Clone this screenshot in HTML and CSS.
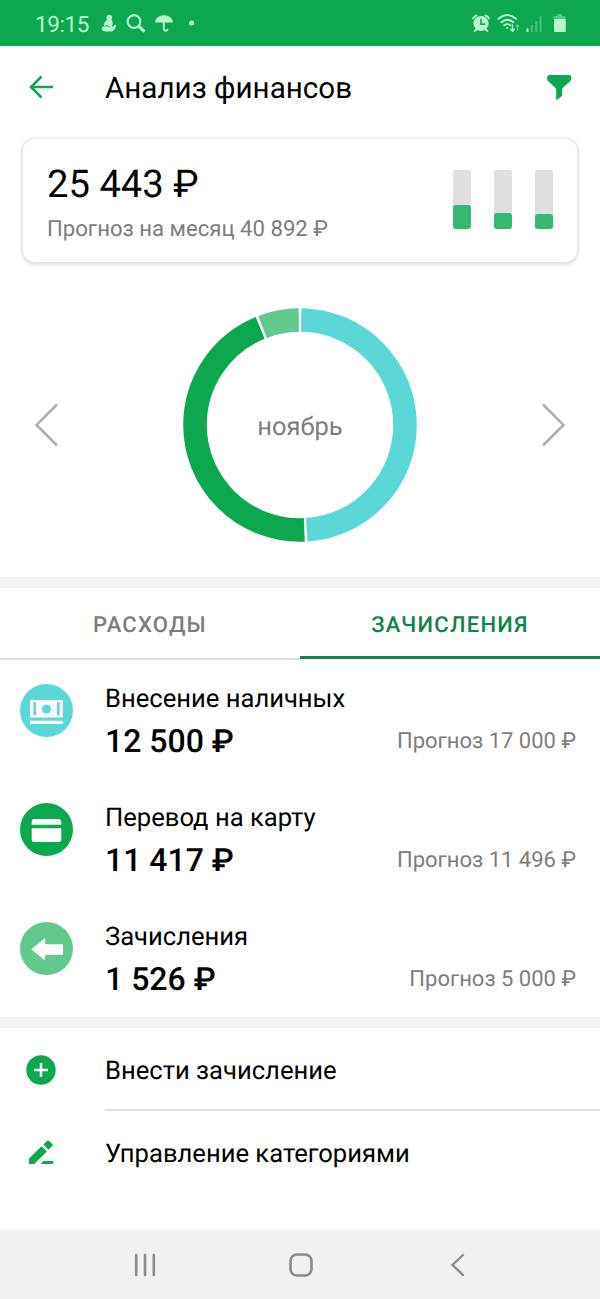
FILE: index.html
```html
<!DOCTYPE html>
<html lang="ru">
<head>
<meta charset="utf-8">
<title>Анализ финансов</title>
<link rel="stylesheet" href="styles.css">
</head>
<body>
<div class="screen">
  <div class="status">
    <span class="clock">19:15</span>
    <svg class="status-left" width="100" height="30" viewBox="98 8 100 30">
      <g fill="#b9f5cf">
        <circle cx="109.300" cy="17.600" r="2.900"/>
        <path d="M106.500 20h5.500l.8 3.500-.9 3.200c1.500.4 2.200-2.200 3.800-2 .8 2.500-1.100 6-4.300 6.800h-6.200c-2.500-.4-3.800-1.800-3.400-3.200.6-1.700 1.700-1.300 2.200-2.500-.6-2 1-4 2.500-5.800z"/>
        <path d="M155 22.600c.4-4.500 4-7.400 9-7.400s8.600 2.900 9 7.400z"/>
        <circle cx="191.500" cy="23" r="2.500"/>
      </g>
      <g fill="none" stroke="#b9f5cf" stroke-width="2.200">
        <circle cx="134" cy="21.500" r="6.300"/><path d="M138.700 26.200l5.800 5.500" stroke-width="3"/>
        <path d="M163.800 22v6.600c0 2.900 3.500 2.900 3.700 .3" stroke-width="1.800"/>
      </g>
      <path d="M104.500 26.300l3-.8 1.800 1.800" stroke="#0ca74f" stroke-width=".9" fill="none"/>
    </svg>
    <svg class="status-right" width="100" height="30" viewBox="470 8 100 30">
      <g fill="none" stroke="#b9f5cf" stroke-width="1.900" stroke-linecap="round">
        <circle cx="481" cy="23.500" r="7.600" fill="#b9f5cf" stroke="none"/>
        <path d="M473 18.500q1-2 3.500-3M489 18.500q-1-2-3.500-3M476.500 29.500l-2 1.500M485.500 29.500l2 1.500"/>
        <path d="M481 19.200v4.900h3.700" stroke="#0ca74f" stroke-width="1.600"/>
        <path d="M498.500 18.800q9-7.500 17.500 0M501.500 22.200q6-4.800 11.700 0M504.200 25.300q3.200-2.300 6.100 0"/>
        <circle cx="507" cy="28" r=".6" fill="#b9f5cf" stroke-width="1"/>
        <path d="M512.500 25v6M510.600 29.200l1.900 2 1.900-2" stroke-width="1.300"/>
        <path d="M517.500 30v-5M516 26.500l1.500-1.600 1.500 1.600" stroke-width="1.100" opacity=".5"/>
      </g>
      <path d="M526.500 28.500h2v3.500h-2z" fill="#b9f5cf"/>
      <path d="M530.800 25h2v7h-2zM535.300 21h2v11h-2zM539.600 16h2v16h-2z" fill="#b9f5cf" opacity=".35"/>
      <path d="M557.500 14h4.500v2h2.500q1 0 1 1v3h-12v-3q0-1 1-1h3z" fill="#b9f5cf" opacity=".45"/>
      <path d="M554 19h11.800v12q0 1-1 1h-9.800q-1 0-1-1z" fill="#b9f5cf"/>
    </svg>
  </div>

  <div class="header">
    <svg width="30" height="30" viewBox="26 72 30 30"><path d="M53 87H31M41.500 76.500L31 87l10.500 10.500" fill="none" stroke="#0ca74f" stroke-width="2.500"/></svg>
    <h1>Анализ финансов</h1>
    <svg width="30" height="30" viewBox="544 72 30 30"><path d="M547.200 77.500q0-2.500 2.500-2.500h19q2.500 0 2.500 2.500v1.500q0 1.300-1 2.200l-7.500 6.800q-.7.700-.7 1.800v6.200l-5.800 4.200v-10.400q0-1.100-.7-1.800l-7.300-6.800q-1-.9-1-2.200z" fill="#0ca74f"/></svg>
  </div>

  <div class="card">
    <div>
      <div class="total">25 443 ₽</div>
      <div class="month-forecast">Прогноз на месяц 40 892 ₽</div>
    </div>
    <div class="bars">
      <div class="bar"><i style="height:23.500px"></i></div>
      <div class="bar"><i style="height:16px"></i></div>
      <div class="bar"><i style="height:14.500px"></i></div>
    </div>
  </div>

  <div class="chart">
    <svg width="30" height="50" viewBox="30 400 30 50"><path d="M57 404.500L36.500 425 57 445.500" fill="none" stroke="#b0b0b0" stroke-width="2.500"/></svg>
    <div class="ring">
      <svg width="236" height="236" viewBox="-118 -118 236 236">
        <g transform="rotate(-90)" fill="none" stroke-width="23.600">
          <circle r="105" pathLength="360" stroke="#5bd7d7" stroke-dasharray="175.500 184.500" stroke-dashoffset="-.7"/>
          <circle r="105" pathLength="360" stroke="#0ca74f" stroke-dasharray="160.100 199.900" stroke-dashoffset="-177.600"/>
          <circle r="105" pathLength="360" stroke="#62c88e" stroke-dasharray="20.200 339.800" stroke-dashoffset="-339.100"/>
        </g>
      </svg>
      <span>ноябрь</span>
    </div>
    <svg width="30" height="50" viewBox="540 400 30 50"><path d="M543 404.500L563.500 425 543 445.500" fill="none" stroke="#b0b0b0" stroke-width="2.500"/></svg>
  </div>

  <div class="divider"></div>
  <div class="tabs">
    <div class="tab">РАСХОДЫ</div>
    <div class="tab active">ЗАЧИСЛЕНИЯ</div>
  </div>

  <div class="list">
    <div class="row">
      <svg width="53" height="53" viewBox="0 0 53 53"><circle cx="26.500" cy="26.500" r="26.500" fill="#5bd7d7"/><path d="M10 16h33v17.500H10zM10 36.700h33v3.200H10z" fill="#fff"/><path d="M14.700 18.200v13M38.300 18.200v13" stroke="#5bd7d7" stroke-width="2.600"/><circle cx="26.500" cy="25" r="4.600" fill="#5bd7d7"/></svg>
      <div class="info"><div class="name">Внесение наличных</div><div class="line"><b>12 500 ₽</b><span>Прогноз 17 000 ₽</span></div></div>
    </div>
    <div class="row">
      <svg width="53" height="53" viewBox="0 0 53 53"><circle cx="26.500" cy="26.500" r="26.500" fill="#0ca74f"/><path d="M11.700 21.800v-3.300q0-2.500 2.500-2.500h24.600q2.500 0 2.500 2.500v3.300zM11.700 25.300h29.600v11.400q0 2.300-2.300 2.300H14q-2.300 0-2.300-2.300z" fill="#fff"/></svg>
      <div class="info"><div class="name">Перевод на карту</div><div class="line"><b>11 417 ₽</b><span>Прогноз 11 496 ₽</span></div></div>
    </div>
    <div class="row">
      <svg width="53" height="53" viewBox="0 0 53 53"><circle cx="26.500" cy="26.500" r="26.500" fill="#62c88e"/><path d="M11.300 27.300L24 16.800q1.200-.8 1.200.5v4.900H42q1 0 1 1v8.600q0 1-1 1H25.200v4.500q0 1.300-1.200.5z" fill="#fff"/></svg>
      <div class="info"><div class="name">Зачисления</div><div class="line"><b>1 526 ₽</b><span>Прогноз 5 000 ₽</span></div></div>
    </div>
  </div>

  <div class="divider"></div>
  <div class="action">
    <svg width="30" height="30" viewBox="0 0 30 30"><circle cx="15" cy="15" r="14.700" fill="#0ca74f"/><path d="M15 8v14M8 15h14" stroke="#fff" stroke-width="2.500"/></svg>
    <div class="label first">Внести зачисление</div>
  </div>
  <div class="action">
    <svg width="30" height="30" viewBox="26 1138 30 30"><g fill="#0ca74f"><path d="M29 1164v-5.400l12.600-12.300 5.200 5.100-12.500 12.600zM43.300 1144.600l3.700-3.700q1-1 2 0l3.300 3.200q1 1 0 2l-3.800 3.700zM43.500 1161h9.700v3H40.800z"/></g></svg>
    <div class="label">Управление категориями</div>
  </div>

  <div class="nav">
    <svg width="26" height="30" viewBox="132 1250 26 30"><path d="M136.200 1255v20M145 1255v20M153.800 1255v20" stroke="#8b8b8b" stroke-width="2.600" stroke-linecap="round"/></svg>
    <svg width="30" height="30" viewBox="287 1250 30 30"><rect x="290.500" y="1254.500" width="21" height="21" rx="6.500" fill="none" stroke="#8b8b8b" stroke-width="2.600"/></svg>
    <svg width="26" height="30" viewBox="445 1250 26 30"><path d="M463 1255l-10.500 10 10.500 10" fill="none" stroke="#8b8b8b" stroke-width="2.400" stroke-linecap="round"/></svg>
  </div>
</div>
</body>
</html>
```

FILE: styles.css
```css
* { box-sizing: border-box; }
body { margin: 0; background: #fff; color: #000; font-family: Roboto, "Noto Sans", sans-serif; text-rendering: geometricPrecision; }
svg { display: block; flex: none; }
.screen { width: 600px; height: 1299px; display: flex; flex-direction: column; overflow: hidden; }
.status { height: 46px; flex: none; background: #0ca74f; display: flex; align-items: center; padding: 0 30px 0 35px; }
.clock { width: 63px; color: #b9f5cf; font-size: 22.5px; letter-spacing: -.4px; line-height: 30px; padding-top: 3px; }
.status-right { margin-left: auto; }
.header { height: 93px; flex: none; display: flex; align-items: flex-start; padding: 26px 26px 0; }
.header h1 { flex: 1; margin: 0 0 0 49px; font-weight: 400; font-size: 29.6px; line-height: 34px; }
.card { height: 123px; flex: none; margin: 0 23px; padding: 24px 24px 0; display: flex; justify-content: space-between; border-radius: 12px; background: #fff; box-shadow: 0 1px 4px 1px rgba(0,0,0,.17); }
.total { font-size: 38.2px; line-height: 44px; }
.month-forecast { font-size: 22.15px; line-height: 26px; margin-top: 9px; color: #7d7d7d; }
.bars { display: flex; gap: 23px; padding-top: 7px; }
.bar { width: 18px; height: 58.500px; display: flex; align-items: flex-end; background: #e0e0e0; border-radius: 2px 2px 4px 4px; }
.bar i { width: 18px; background: #35b871; border-radius: 3px; }
.chart { height: 315px; flex: none; display: flex; justify-content: space-between; align-items: center; padding: 11px 30px 0; }
.ring { display: grid; place-items: center; }
.ring > * { grid-area: 1 / 1; }
.ring span { font-size: 25.5px; color: #7d7d7d; padding-top: 4px; }
.divider { height: 11px; flex: none; background: #f4f4f4; }
.tabs { height: 72px; flex: none; display: flex; }
.tab { flex: 1; text-align: center; font-size: 22px; font-weight: 500; letter-spacing: 1.25px; line-height: 76px; color: #7d7d7d; height: 72px; border-bottom: 2px solid #dedede; }
.tab.active { color: #128349; height: 71px; border-bottom: 3px solid #128349; }
.list { height: 357px; flex: none; }
.row { height: 119px; padding: 24px 24px 0 20px; display: flex; align-items: flex-start; }
.info { flex: 1; margin-left: 32px; }
.name { font-size: 25.6px; line-height: 31px; }
.line { display: flex; justify-content: space-between; align-items: flex-start; margin-top: 7px; line-height: 38px; }
.line b { font-size: 32px; font-weight: 500; }
.line span { font-size: 22px; line-height: 39px; color: #7d7d7d; }
.action { height: 83px; flex: none; display: flex; align-items: center; padding-left: 26px; }
.label { flex: 1; height: 83px; margin-left: 49px; font-size: 25.6px; line-height: 86px; }
.label.first { border-bottom: 2px solid #e0e0e0; }
.nav { height: 69px; flex: none; margin-top: auto; background: #f1f1f1; display: flex; justify-content: space-between; align-items: center; padding: 0 129px 0 132px; }
```
